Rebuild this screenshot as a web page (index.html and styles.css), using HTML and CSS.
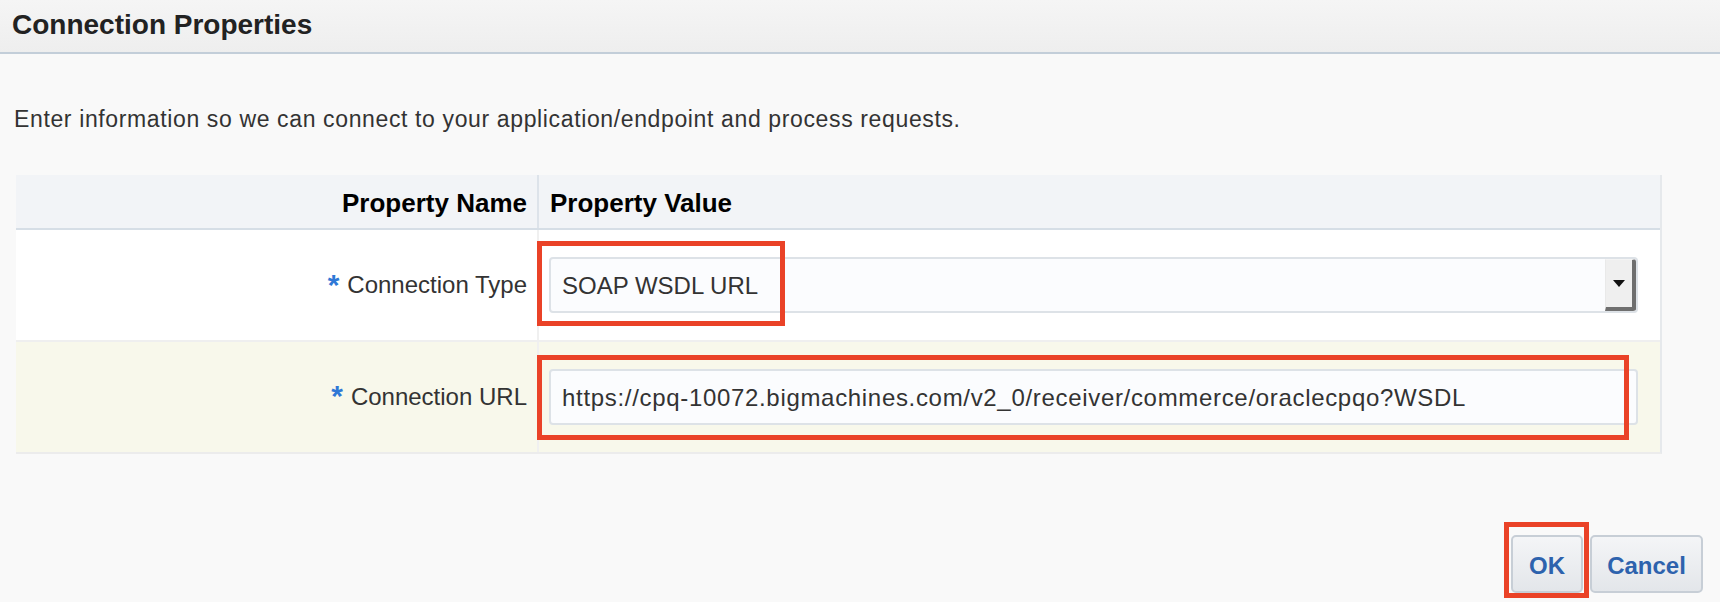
FILE: index.html
```html
<!DOCTYPE html>
<html lang="en">
<head>
<meta charset="utf-8">
<title>Connection Properties</title>
<link rel="stylesheet" href="styles.css">
</head>
<body>
<header class="header">
  <h1 class="title">Connection Properties</h1>
</header>
<main class="content">
  <p class="intro">Enter information so we can connect to your application/endpoint and process requests.</p>
  <div class="props">
    <div class="row head">
      <div class="cell name">Property Name</div>
      <div class="cell value">Property Value</div>
    </div>
    <div class="row body">
      <div class="cell name"><span class="req">*</span>Connection Type</div>
      <div class="cell value">
        <div class="select">
          <span class="select-text">SOAP WSDL URL</span>
          <span class="select-btn"><span class="arrow"></span></span>
        </div>
        <span class="mark mark-type"></span>
      </div>
    </div>
    <div class="row body alt">
      <div class="cell name"><span class="req">*</span>Connection URL</div>
      <div class="cell value">
        <div class="input">https://cpq-10072.bigmachines.com/v2_0/receiver/commerce/oraclecpqo?WSDL</div>
        <span class="mark mark-url"></span>
      </div>
    </div>
  </div>
  <div class="actions">
    <div class="btn-wrap">
      <button class="btn btn-ok">OK</button>
      <span class="mark mark-ok"></span>
    </div>
    <button class="btn btn-cancel">Cancel</button>
  </div>
</main>
</body>
</html>
```

FILE: styles.css
```css
* { box-sizing: border-box; }

html, body {
  margin: 0;
  padding: 0;
}

body {
  width: 1720px;
  height: 602px;
  overflow: hidden;
  background: #f9f9f9;
  font-family: "Liberation Sans", Arial, sans-serif;
  color: #333;
}

.header {
  height: 54px;
  padding: 11px 0 0 12px;
  background: linear-gradient(#f5f5f5, #eeeeee);
  border-bottom: 2px solid #c3ced9;
}

.title {
  margin: 0;
  font-size: 28px;
  line-height: 28px;
  font-weight: bold;
  color: #222;
}

.content {
  padding: 0;
}

.intro {
  margin: 0;
  padding: 54px 0 0 14px;
  font-size: 23px;
  line-height: 22px;
  letter-spacing: 0.63px;
  color: #333;
}

.props {
  margin: 45px 0 0 16px;
  width: 1646px;
  border-right: 2px solid #e6e9ec;
  border-bottom: 2px solid #ececec;
}

.row {
  display: flex;
}

.row.head {
  height: 55px;
  background: #f2f4f7;
  border-bottom: 2px solid #d6dee6;
  font-size: 26px;
  font-weight: bold;
  color: #000;
}

.row.body {
  height: 112px;
  background: #ffffff;
  border-bottom: 2px solid #efefef;
  font-size: 24px;
}

.row.body.alt {
  background: #f8f8eb;
  border-bottom: 0;
  height: 110px;
}

.cell {
  display: flex;
  align-items: center;
}

.cell.name {
  width: 523px;
  justify-content: flex-end;
  padding-right: 10px;
  border-right: 2px solid #f0f0f0;
  white-space: nowrap;
}

.row.head .cell.name {
  border-right-color: #dde3ea;
  padding-top: 3px;
}

.row.head .cell.value {
  padding-left: 11px;
  padding-top: 3px;
}

.cell.value {
  flex: 1;
  position: relative;
  padding: 0 22px 0 10px;
}

.req {
  color: #2f78d6;
  font-weight: bold;
  font-size: 30px;
  line-height: 1;
  align-self: flex-start;
  margin-top: 40px;
  margin-right: 8px;
}

.row.body.alt .req {
  margin-top: 39px;
}

.select,
.input {
  width: 100%;
  height: 56px;
  background: #fbfcfe;
  border: 2px solid #dde2e7;
  border-radius: 4px;
  color: #333;
  font-size: 24px;
  display: flex;
  align-items: center;
  padding-left: 11px;
}

.select {
  padding-right: 0;
  justify-content: space-between;
}

.select-text {
  padding-top: 1px;
}

.select-btn {
  width: 31px;
  height: 52px;
  background: #efefef;
  border-top: 1px solid #f4f4f4;
  border-left: 1px solid #e9e9e9;
  border-right: 4px solid #6f6f6f;
  border-bottom: 4px solid #6f6f6f;
  border-radius: 0 3px 3px 0;
  display: flex;
  align-items: center;
  justify-content: center;
}

.arrow {
  width: 0;
  height: 0;
  border-left: 6px solid transparent;
  border-right: 6px solid transparent;
  border-top: 7px solid #111;
}

.input {
  padding-top: 1px;
  letter-spacing: 0.68px;
}

.mark {
  position: absolute;
  border: 5px solid #ea4227;
  pointer-events: none;
}

.mark-type {
  left: -2px;
  top: 11px;
  width: 248px;
  height: 85px;
}

.mark-url {
  left: -2px;
  top: 13px;
  width: 1092px;
  height: 85px;
}

.actions {
  display: flex;
  justify-content: flex-end;
  gap: 7px;
  margin-top: 81px;
  padding-right: 17px;
}

.btn-wrap {
  position: relative;
}

.btn {
  height: 58px;
  margin: 0;
  padding: 3px 0 0;
  background: linear-gradient(#f4f5f7, #e3e6ea);
  border: 2px solid #c7ced6;
  border-radius: 5px;
  color: #2d62ad;
  font-family: "Liberation Sans", Arial, sans-serif;
  font-size: 24px;
  font-weight: bold;
  display: block;
}

.btn-ok {
  width: 72px;
}

.btn-cancel {
  width: 113px;
}

.mark-ok {
  left: -7px;
  top: -13px;
  width: 85px;
  height: 76px;
}
```
